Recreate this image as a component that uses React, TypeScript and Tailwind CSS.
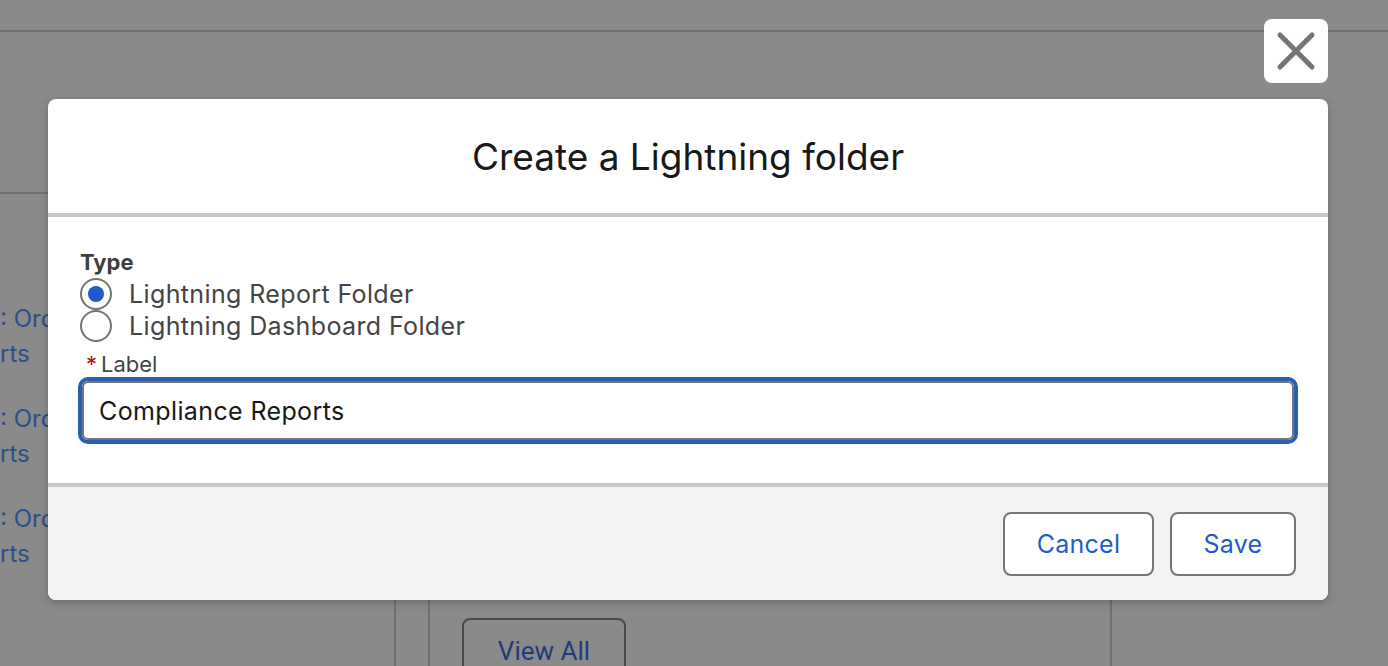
import React from "react";

const font = { fontFamily: "Inter, 'Noto Sans', sans-serif" };

function Radio({ checked, label }: { checked: boolean; label: string }) {
  return (
    <label className="flex h-[32px] items-center gap-[17px]">
      <span className="flex h-[32px] w-[32px] items-center justify-center rounded-full border-2 border-[#747474] bg-white">
        {checked && <span className="h-[16px] w-[16px] rounded-full bg-[#2358c9]" />}
      </span>
      <span className="pt-[2px] text-[25px] tracking-[0.015em] text-[#444444]">{label}</span>
    </label>
  );
}

function BackgroundItem() {
  return (
    <div className="text-[24px] leading-[35px] text-[#29508a]">
      <div className="whitespace-nowrap">: Orders</div>
      <div>rts</div>
    </div>
  );
}

export default function App() {
  return (
    <div className="relative h-[666px] w-[1388px] overflow-hidden bg-[#8a8a8a]" style={font}>
      {/* page behind the overlay */}
      <div className="h-[32px] border-b-2 border-[#707070]" />
      <div className="mt-[160px] flex gap-[32px]">
        <div className="flex h-[480px] w-[396px] flex-col gap-[30px] border-r-2 border-t-2 border-[#707070] pt-[107px]">
          <BackgroundItem />
          <BackgroundItem />
          <BackgroundItem />
        </div>
        <div className="h-[480px] w-[684px] border-x-2 border-[#707070] px-[32px] pt-[426px]">
          <button
            className="h-[64px] w-[164px] rounded-lg border-2 border-[#4a4a4a] pt-[2px] text-[26px] text-[#1f3b7a]"
            style={{ fontFamily: "Roboto, sans-serif" }}
          >
            View All
          </button>
        </div>
      </div>

      {/* close button */}
      <button className="absolute left-[1264px] top-[19px] flex h-[64px] w-[64px] items-center justify-center rounded-lg bg-white">
        <svg width="64" height="64" viewBox="0 0 64 64">
          <path d="M16 16 L48 48 M48 16 L16 48" stroke="#747474" strokeWidth="5" strokeLinecap="round" />
        </svg>
      </button>

      {/* dialog */}
      <div className="absolute left-[48px] top-[99px] flex w-[1280px] flex-col overflow-hidden rounded-lg bg-white shadow-[0_3px_8px_rgba(0,0,0,0.22)]">
        <div className="flex h-[118px] items-center justify-center border-b-4 border-[#c9c9c9] pt-[2px]">
          <h1 className="text-[37px] text-[#181818]">Create a Lightning folder</h1>
        </div>
        <div className="flex h-[270px] flex-col border-b-4 border-[#c9c9c9] px-[32px] pt-[30px]">
          <div className="text-[22px] font-bold leading-[31px] text-[#3e3e3c]">Type</div>
          <Radio checked label="Lightning Report Folder" />
          <Radio checked={false} label="Lightning Dashboard Folder" />
          <div className="mt-[8px] flex items-center pt-[1px] text-[22px] leading-[27px] text-[#444444]">
            <span className="mr-[4px] ml-[6px] text-[#ba0517]">*</span>Label
          </div>
          <div className="mx-[2px] mt-[3px] flex h-[59px] items-center rounded-[6px] border-2 border-[#747474] px-[15px] pt-[3px] text-[25px] tracking-[0.015em] text-[#181818] shadow-[0_0_0_4px_#2a5fae]">
            Compliance Reports
          </div>
        </div>
        <div className="flex h-[113px] items-center justify-end gap-[16px] bg-[#f3f3f3] px-[32px]">
          <button className="h-[64px] w-[151px] rounded-lg border-2 border-[#767676] bg-white pt-[2px] text-[25px] tracking-[0.01em] text-[#1f5ccc]">
            Cancel
          </button>
          <button className="h-[64px] w-[126px] rounded-lg border-2 border-[#767676] bg-white pt-[2px] text-[25px] tracking-[0.01em] text-[#1f5ccc]">
            Save
          </button>
        </div>
      </div>
    </div>
  );
}
